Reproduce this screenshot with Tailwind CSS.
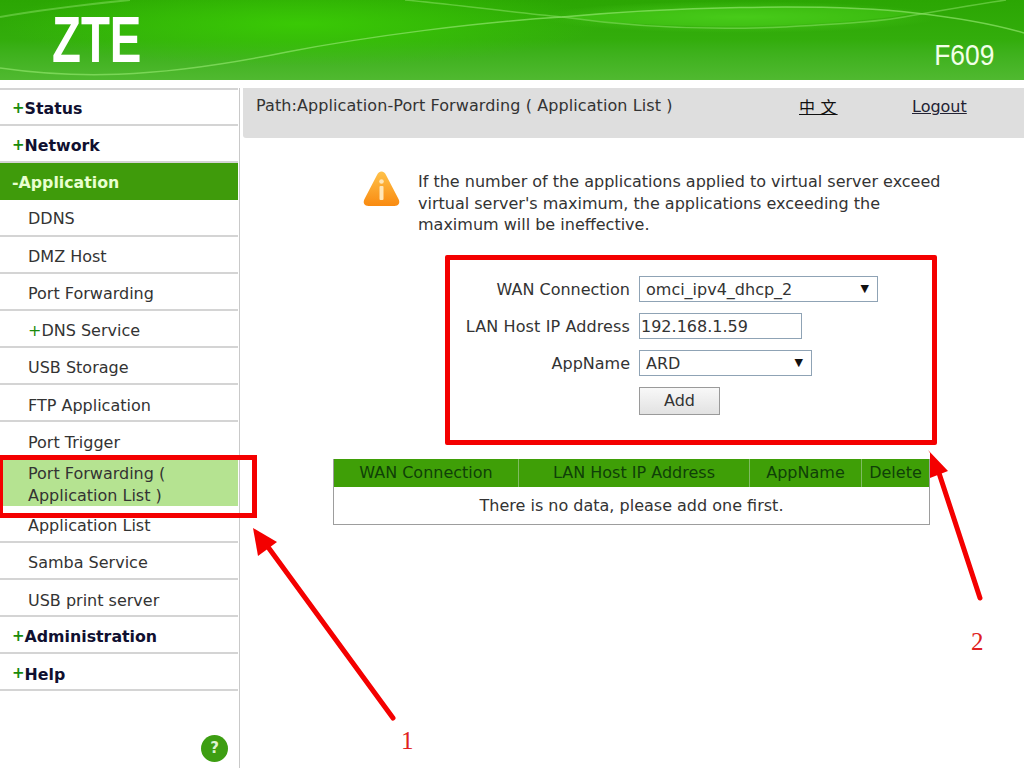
<!DOCTYPE html>
<html>
<head>
<meta charset="utf-8">
<script src="https://cdn.jsdelivr.net/npm/@tailwindcss/browser@4"></script>
</head>
<body class="bg-white overflow-hidden">
<div class="relative w-[1024px] h-[768px] overflow-hidden bg-white text-[16px] text-[#333] font-['DejaVu_Sans',sans-serif]">
  <header class="relative h-[80px] overflow-hidden bg-gradient-to-b from-[#2ba603] via-[#33ad0c] to-[#50b930]">
    <svg class="absolute inset-0" width="1024" height="80" viewBox="0 0 1024 80" fill="none">
      <defs>
        <radialGradient id="g1"><stop offset="0" stop-color="#3acb05" stop-opacity="0.95"/><stop offset="1" stop-color="#3acb05" stop-opacity="0"/></radialGradient>
        <radialGradient id="g2"><stop offset="0" stop-color="#4fd320" stop-opacity="0.8"/><stop offset="1" stop-color="#4fd320" stop-opacity="0"/></radialGradient>
      </defs>
      <ellipse cx="300" cy="24" rx="300" ry="42" fill="url(#g1)"/>
      <ellipse cx="740" cy="17" rx="200" ry="16" fill="url(#g2)"/>
      <path d="M562 17 C640 8 800 2 915 13 C860 24 700 34 562 17 Z" fill="#48cc18" opacity="0.45"/>
      <path d="M0 68 C70 78 150 80 287 52 C370 36 480 22 562 17 C660 8 820 2 915 13 C960 18 1000 26 1024 33" stroke="#8ae066" stroke-width="1.500" opacity="0.75"/>
      <path d="M405 0 C450 4 510 12 562 17 C640 28 720 30 784 27 C840 24 880 22 915 15 C950 9 985 3 1006 0" stroke="#8ae066" stroke-width="1.500" opacity="0.55"/>
      <path d="M0 17 C40 10 90 4 130 0" stroke="#8ae066" stroke-width="2" opacity="0.5"/>
    </svg>
    <span class="absolute left-[52px] top-[3px] origin-left scale-x-[0.74] text-[64px] font-bold leading-[74px] text-white font-['Liberation_Sans',sans-serif]">ZTE</span>
    <span class="absolute right-[30px] top-[39px] origin-right scale-x-[0.88] text-[30px] leading-[32px] text-[#f2ffe8] font-['Liberation_Sans',sans-serif]">F609</span>
  </header>

  <div class="flex pt-[8px]">
    <nav class="w-[240px] h-[680px] shrink-0 border-r border-[#c9c9c9] pr-[1px] text-[16px]">
      <div class="h-[38px] border-t-2 border-b-2 border-[#d4d4d4] flex items-center pl-[12px] pt-[4px] font-bold text-[15.800px] text-[#101030]"><span class="text-[#1a8a0a] font-bold text-[15px] leading-none -translate-y-[1px]">+</span>Status</div>
      <div class="h-[37px] border-b-2 border-[#d4d4d4] flex items-center pl-[12px] pt-[5px] font-bold text-[15.800px] text-[#101030]"><span class="text-[#1a8a0a] font-bold text-[15px] leading-none -translate-y-[1px]">+</span>Network</div>
      <div class="h-[37px] bg-[#3f9b0b] flex items-center pl-[12px] pt-[3px] font-bold text-[15.800px] text-[#e8ffd0]">-Application</div>
      <div class="h-[37px] border-b-2 border-[#d4d4d4] flex items-center pl-[28px] pt-[3px]">DDNS</div>
      <div class="h-[37px] border-b-2 border-[#d4d4d4] flex items-center pl-[28px] pt-[4px]">DMZ Host</div>
      <div class="h-[37px] border-b-2 border-[#d4d4d4] flex items-center pl-[28px] pt-[4px]">Port Forwarding</div>
      <div class="h-[37px] border-b-2 border-[#d4d4d4] flex items-center pl-[28px] pt-[4px]"><span class="text-[#1a8a0a]">+</span>DNS Service</div>
      <div class="h-[37px] border-b-2 border-[#d4d4d4] flex items-center pl-[28px] pt-[4px]">USB Storage</div>
      <div class="h-[37px] border-b-2 border-[#d4d4d4] flex items-center pl-[28px] pt-[7px]">FTP Application</div>
      <div class="h-[38px] flex items-center pl-[28px] pt-[4px]">Port Trigger</div>
      <div class="h-[46px] ml-[3px] bg-[#b5e391] flex items-center pl-[25px] pt-[4px] leading-[22px]">Port Forwarding (<br>Application List )</div>
      <div class="h-[37px] border-b-2 border-[#d4d4d4] flex items-center pl-[28px] pt-[5px]">Application List</div>
      <div class="h-[37px] border-b-2 border-[#d4d4d4] flex items-center pl-[28px] pt-[5px]">Samba Service</div>
      <div class="h-[37px] border-b-2 border-[#d4d4d4] flex items-center pl-[28px] pt-[6px]">USB print server</div>
      <div class="h-[37px] border-b-2 border-[#d4d4d4] flex items-center pl-[12px] pt-[5px] font-bold text-[15.800px] text-[#101030]"><span class="text-[#1a8a0a] font-bold text-[15px] leading-none -translate-y-[1px]">+</span>Administration</div>
      <div class="h-[37px] border-b-2 border-[#d4d4d4] flex items-center pl-[12px] pt-[6px] font-bold text-[15.800px] text-[#101030]"><span class="text-[#1a8a0a] font-bold text-[15px] leading-none -translate-y-[1px]">+</span>Help</div>
      <div class="flex justify-end pr-[10px] pt-[44px]">
        <div class="w-[27px] h-[27px] rounded-full bg-[#3d9e12] text-[#dff3d2] font-bold text-[15px] flex items-center justify-center">?</div>
      </div>
    </nav>

    <main class="flex-1 pl-[3px]">
      <div class="h-[50px] bg-[#dedede] rounded-bl-[3px] flex items-start pl-[13px] pt-[6px]">
        <span class="w-[543px] leading-[24px] tracking-[0.09px] whitespace-nowrap">Path:Application-Port Forwarding ( Application List )</span>
        <a class="w-[113px] underline leading-[24px] text-[#111] tracking-[1px] font-['Noto_Sans_CJK_SC',sans-serif]">中 文</a>
        <a class="underline leading-[26px] text-[#223]">Logout</a>
      </div>

      <div class="flex pl-[119px] pt-[32px]">
        <svg class="shrink-0" width="39" height="40" viewBox="0 0 38 40">
          <defs><linearGradient id="w" x1="0" y1="0" x2="0" y2="1"><stop offset="0" stop-color="#ffc24a"/><stop offset="1" stop-color="#f98a10"/></linearGradient></defs>
          <path d="M19 1.500 C21 1.500 22.500 3 23.500 5 L36 29 C38 33 36 36 32 36 L6 36 C2 36 0 33 2 29 L14.500 5 C15.500 3 17 1.500 19 1.500 Z" fill="url(#w)"/>
          <rect x="17" y="16" width="4" height="14" rx="1" fill="#ffe6b8"/>
          <circle cx="19" cy="11.500" r="2.300" fill="#ffe6b8"/>
        </svg>
        <p class="ml-[17px] w-[540px] leading-[21.500px] pt-[1px]">If the number of the applications applied to virtual server exceed virtual server's maximum, the applications exceeding the maximum will be ineffective.</p>
      </div>

      <form class="pl-[221px] pt-[40px] flex flex-col">
        <div class="flex items-center h-[26px]">
          <label class="w-[166px] text-right pt-[2px]">WAN Connection</label>
          <div class="ml-[9px] w-[239px] h-[26px] border border-[#8fa3b5] pl-[6px] pt-[2px] flex items-center justify-between pr-[8px]">omci_ipv4_dhcp_2<span class="text-[11px] text-[#111]">▼</span></div>
        </div>
        <div class="flex items-center h-[26px] mt-[11px]">
          <label class="w-[166px] text-right whitespace-nowrap tracking-[0.12px] pt-[2px]">LAN Host IP Address</label>
          <div class="ml-[9px] w-[163px] h-[26px] border border-[#8fa3b5] pl-[1px] pt-[2px] flex items-center">192.168.1.59</div>
        </div>
        <div class="flex items-center h-[26px] mt-[11px]">
          <label class="w-[166px] text-right pt-[2px]">AppName</label>
          <div class="ml-[9px] w-[173px] h-[26px] border border-[#8fa3b5] pl-[6px] pt-[2px] flex items-center justify-between pr-[8px]">ARD<span class="text-[11px] text-[#111]">▼</span></div>
        </div>
        <div class="pl-[175px] mt-[11px]">
          <button type="button" class="block w-[81px] h-[28px] border border-[#9a9a9a] bg-gradient-to-b from-[#f8f8f8] to-[#e2e2e2] text-[#333]">Add</button>
        </div>
      </form>

      <div class="ml-[90px] mt-[44px] w-[597px] border border-[#9d9d9d] border-t-0">
        <div class="grid grid-cols-[185px_231px_112px_67px] h-[28px] bg-[#3f9f07] text-[#0f4008] text-center leading-[27px] whitespace-nowrap">
          <div class="border-r border-[#7fbb62]">WAN Connection</div>
          <div class="border-r border-[#7fbb62]">LAN Host IP Address</div>
          <div class="border-r border-[#7fbb62]">AppName</div>
          <div>Delete</div>
        </div>
        <div class="h-[37px] pt-[2px] flex items-center justify-center">There is no data, please add one first.</div>
      </div>
    </main>
  </div>

  <div class="absolute left-[-2px] top-[455px] w-[259px] h-[63px] border-[5px] border-[#f40000]"></div>
  <div class="absolute left-[445px] top-[255px] w-[492px] h-[190px] border-[5px] border-[#f40000] rounded-[2px]"></div>
  <svg class="absolute left-0 top-0 pointer-events-none" width="1024" height="768" viewBox="0 0 1024 768" fill="none">
    <path d="M393 718 L268 547" stroke="#f40000" stroke-width="5" stroke-linecap="round"/>
    <path d="M253 528 L277 542 L258 556 Z" fill="#f40000"/>
    <path d="M980 598 L938 470" stroke="#f40000" stroke-width="5" stroke-linecap="round"/>
    <path d="M928 450 L948 471 L930 478 L930 453 Z" fill="#f40000"/>
  </svg>
  <span class="absolute left-[401px] top-[726px] text-[25px] leading-[30px] text-[#e02020] font-['Liberation_Serif',serif]">1</span>
  <span class="absolute left-[971px] top-[627px] text-[25px] leading-[30px] text-[#e02020] font-['Liberation_Serif',serif]">2</span>
</div>
</body>
</html>
